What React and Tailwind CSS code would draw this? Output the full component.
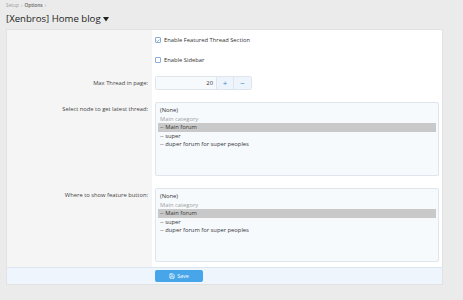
import { Save } from 'lucide-react';

const font = { fontFamily: '"Open Sans", "Noto Sans", sans-serif' };

const nodes = [
  { label: '(None)' },
  { label: 'Main category', muted: true },
  { label: '-- Main forum', selected: true },
  { label: '-- super' },
  { label: '-- duper forum for super peoples' },
];

function Checkbox({ checked, label }) {
  return (
    <div className="flex items-center gap-[3px]">
      <span className="w-[6px] h-[6px] border border-[#8aaed3] rounded-[1px] bg-white flex items-center justify-center">
        {checked && (
          <svg viewBox="0 0 6 6" className="w-[5px] h-[5px]">
            <path d="M1 3.1 L2.4 4.4 L5 1.6" fill="none" stroke="#3f86cc" strokeWidth="0.9" />
          </svg>
        )}
      </span>
      <span className="text-[5.8px] text-[#333]">{label}</span>
    </div>
  );
}

function NodeList() {
  return (
    <div className="h-[74px] border border-[#dfe5ec] rounded-[2px] bg-[#f7fafd] px-[2px] pt-[3px]">
      {nodes.map((n) => (
        <div
          key={n.label}
          className={`h-[8.5px] leading-[8.5px] pl-[2px] text-[5.8px] ${n.selected ? 'bg-[#c9c9c9]' : ''} ${n.muted ? 'text-[#a0a0a0]' : 'text-[#333]'}`}
        >
          {n.label}
        </div>
      ))}
    </div>
  );
}

function Row({ label, children, className = '', labelClass = '' }) {
  return (
    <div className="grid grid-cols-[145px_1fr]">
      <div className={`bg-[#f5f5f5] text-right pr-[4px] text-[5.8px] text-[#444] ${className} ${labelClass}`}>
        {label}
      </div>
      <div className={`bg-white pl-[3px] pr-[3px] ${className}`}>{children}</div>
    </div>
  );
}

export default function App() {
  return (
    <div className="w-[463px] h-[300px] bg-[#ebebeb] px-[6px] overflow-hidden" style={font}>
      <div className="pt-[2px] h-[9px] text-[4.8px] text-[#9a9a9a] flex items-center gap-[2px]">
        <span>Setup</span>
        <span>›</span>
        <span className="text-[#666] font-semibold">Options</span>
        <span>›</span>
      </div>
      <div className="h-[20px] flex items-center gap-[2px] text-[9.6px] text-[#222] leading-none">
        <span>[Xenbros] Home blog</span>
        <svg viewBox="0 0 8 6" className="w-[6px] h-[4.5px] mt-[1px]">
          <path d="M0 0 H8 L4 6 Z" fill="#222" />
        </svg>
      </div>

      <div className="w-[437px] border border-[#e2e2e2] bg-white">
        <Row label="" className="h-[20px]">
          <div className="flex h-full items-center">
            <Checkbox checked label="Enable Featured Thread Section" />
          </div>
        </Row>
        <Row label="" className="h-[20px]">
          <div className="flex h-full items-center">
            <Checkbox label="Enable Sidebar" />
          </div>
        </Row>
        <Row label="Max Thread in page:" className="pt-[6px]" labelClass="leading-[14px]">
          <div className="w-[97px] h-[14px] flex border border-[#dfe5ec] rounded-[2px] overflow-hidden">
            <div className="flex-1 bg-[#f7fafd] text-right pr-[3px] text-[5.8px] text-[#333] leading-[12px]">20</div>
            <div className="w-[17px] bg-[#eef4fb] border-l border-[#dfe5ec] flex items-center justify-center text-[#3f86cc] text-[8px] leading-none">+</div>
            <div className="w-[18px] bg-[#eef4fb] border-l border-[#dfe5ec] flex items-center justify-center text-[#3f86cc] text-[8px] leading-none">−</div>
          </div>
        </Row>
        <Row label="Select node to get latest thread:" className="pt-[12px]" labelClass="!pt-[15px]">
          <NodeList />
        </Row>
        <Row label="Where to show feature button:" className="pt-[12px] pb-[5px]" labelClass="!pt-[15px]">
          <NodeList />
        </Row>
        <div className="border-t border-[#dde6f0] bg-[#eef5fd] h-[17px] grid grid-cols-[145px_1fr]">
          <div />
          <div className="pl-[3px] pt-[2px]">
            <div className="w-[48px] h-[12px] bg-[#47a5ea] rounded-[2px] flex items-center justify-center gap-[2px] text-white text-[5.4px]">
              <Save size={6} strokeWidth={2.5} />
              <span>Save</span>
            </div>
          </div>
        </div>
      </div>
    </div>
  );
}
